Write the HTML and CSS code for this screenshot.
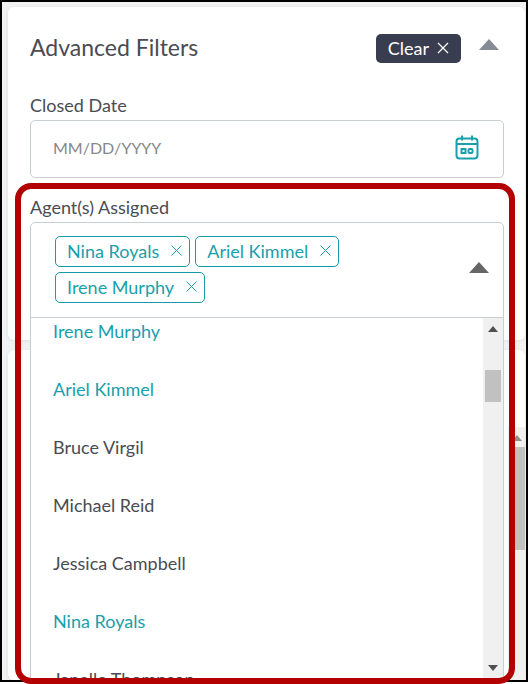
FILE: index.html
```
<!DOCTYPE html>
<html lang="en">
<head>
  <meta charset="UTF-8">
  <meta name="viewport" content="width=device-width, initial-scale=1.0">
  <title>Advanced Filters</title>
  <link rel="stylesheet" href="styles.css">
</head>
<body>
  <div class="frame">
    <section class="card filters">
      <header class="filters-header">
        <h1>Advanced Filters</h1>
        <button type="button" class="clear">Clear
          <svg width="12" height="12" viewBox="0 0 12 12"><path d="M1 1l10 10M11 1L1 11" /></svg>
        </button>
        <button type="button" class="arrow" aria-label="Collapse filters">
          <svg width="20" height="11" viewBox="0 0 20 11"><path d="M10 0l10 11H0z" /></svg>
        </button>
      </header>

      <div class="field">
        <label for="closedDate">Closed Date</label>
        <div class="date-box">
          <input type="text" id="closedDate" placeholder="MM/DD/YYYY">
          <button type="button" class="calendar" aria-label="Open calendar">
            <svg width="24" height="25" viewBox="0 0 24 25">
              <rect x="1.5" y="3.5" width="21" height="20" rx="3" />
              <path d="M1.5 9h21M7 .5v5M17 .5v5" />
              <rect x="6.5" y="14" width="4" height="4" />
              <rect x="13.5" y="14" width="4" height="4" rx="1" />
            </svg>
          </button>
        </div>
      </div>

      <div class="field">
        <label for="agentToggle">Agent(s) Assigned</label>
        <div class="select">
          <div class="tags">
            <span class="tag">Nina Royals
              <button type="button" aria-label="Remove Nina Royals"><svg width="11" height="11" viewBox="0 0 11 11"><path d="M.5 .5l10 10M10.5 .5l-10 10" /></svg></button>
            </span>
            <span class="tag">Ariel Kimmel
              <button type="button" aria-label="Remove Ariel Kimmel"><svg width="11" height="11" viewBox="0 0 11 11"><path d="M.5 .5l10 10M10.5 .5l-10 10" /></svg></button>
            </span>
            <span class="tag">Irene Murphy
              <button type="button" aria-label="Remove Irene Murphy"><svg width="11" height="11" viewBox="0 0 11 11"><path d="M.5 .5l10 10M10.5 .5l-10 10" /></svg></button>
            </span>
          </div>
          <button type="button" class="arrow arrow-dark" id="agentToggle" aria-expanded="true">
            <svg width="20" height="11" viewBox="0 0 20 11"><path d="M10 0l10 11H0z" /></svg>
          </button>

          <div class="menu">
            <ul class="options" role="listbox" aria-multiselectable="true" aria-label="Agents">
              <li role="option" class="selected" aria-selected="true">Irene Murphy</li>
              <li role="option" class="selected" aria-selected="true">Ariel Kimmel</li>
              <li role="option">Bruce Virgil</li>
              <li role="option">Michael Reid</li>
              <li role="option">Jessica Campbell</li>
              <li role="option" class="selected" aria-selected="true">Nina Royals</li>
              <li role="option">Janelle Thompson</li>
            </ul>
            <div class="scrollbar">
              <svg width="10" height="6" viewBox="0 0 10 6"><path d="M5 0l5 6H0z" /></svg>
              <div class="thumb"></div>
              <svg width="10" height="6" viewBox="0 0 10 6"><path d="M0 0h10L5 6z" /></svg>
            </div>
          </div>
        </div>
      </div>
    </section>

    <section class="card results">
      <div class="scrollbar results-scroll">
        <svg width="10" height="6" viewBox="0 0 10 6"><path d="M5 0l5 6H0z" /></svg>
        <div class="thumb"></div>
      </div>
    </section>
  </div>
  <div class="highlight"></div>
</body>
</html>
```

FILE: styles.css
```
* {
  box-sizing: border-box;
}

body {
  margin: 0;
  font-family: Lato, sans-serif;
  font-size: 18px;
  color: #4a4c52;
  background: #fff;
}

h1 {
  flex: 1;
  margin: 0;
  padding-bottom: 3px;
  font-size: 23px;
  font-weight: 400;
  line-height: 26px;
}

button {
  padding: 0;
  border: 0;
  background: none;
  font: inherit;
  color: inherit;
  cursor: pointer;
}

svg {
  display: block;
}

.frame {
  display: flex;
  flex-direction: column;
  gap: 10px;
  height: calc(100vh - 2px);
  padding: 5px 1px 0 6px;
  border: 2px solid #000;
  background: #f2f2f3;
  overflow: hidden;
}

.card {
  background: #fff;
  border-radius: 6px;
  box-shadow: 0 1px 4px rgba(0, 0, 0, 0.08);
}

.filters {
  position: relative;
  z-index: 1;
  padding: 27px 21px 22px 22px;
}

.filters-header {
  display: flex;
  align-items: center;
  margin-bottom: 32px;
}

.clear {
  display: flex;
  align-items: center;
  gap: 8px;
  height: 29px;
  padding: 0 12px 2px;
  border-radius: 5px;
  background: #383e50;
  color: #fff;
}

.clear svg {
  fill: none;
  stroke: #fff;
  stroke-width: 1.3;
}

.arrow {
  margin: 0 5px 8px 18px;
  fill: #878a97;
}

.arrow-dark {
  margin: 0 0 4px;
  fill: #666;
}

.field + .field {
  margin-top: 19px;
}

label {
  display: block;
  margin-bottom: 5px;
  line-height: 20px;
}

.date-box,
.select {
  display: flex;
  align-items: center;
  border: 1px solid #c9ced3;
  border-radius: 5px;
}

.date-box {
  height: 58px;
  padding: 0 24px 3px 22px;
}

.date-box input {
  flex: 1;
  min-width: 0;
  padding: 0;
  border: 0;
  outline: 0;
  font: inherit;
  font-size: 16px;
}

.date-box input::placeholder {
  color: #85878a;
}

.calendar svg {
  fill: none;
  stroke: #1a9fab;
  stroke-width: 2;
}

.select {
  position: relative;
  justify-content: space-between;
  padding: 13px 14px 14px 24px;
  border-radius: 5px 5px 0 0;
}

.tags {
  display: flex;
  flex-wrap: wrap;
  gap: 5px;
  max-width: 380px;
}

.tag {
  display: flex;
  align-items: center;
  gap: 12px;
  height: 31px;
  padding: 0 7px 2px 11px;
  border: 1px solid #149ba6;
  border-radius: 5px;
  color: #1a9fab;
}

.tag svg {
  fill: none;
  stroke: #1a9fab;
}

.menu {
  position: absolute;
  top: 100%;
  left: -1px;
  right: -1px;
  display: flex;
  height: calc(100vh - 319px);
  border: 1px solid #c9ced3;
  background: #fff;
  overflow: hidden;
}

.options {
  display: flex;
  flex: 1;
  flex-direction: column;
  gap: 32px;
  margin: 0;
  padding: 0 22px;
  list-style: none;
  line-height: 26px;
}

.options .selected {
  color: #1a9fab;
}

.scrollbar {
  display: flex;
  flex-direction: column;
  align-items: center;
  width: 20px;
  padding: 8px 0 10px;
  background: #f0f0f0;
  fill: #505050;
}

.thumb {
  width: 16px;
  height: 32px;
  margin: 38px 0 auto;
  background: #c1c1c1;
}

.results {
  flex: 1;
  display: flex;
  justify-content: flex-end;
  padding-top: 77px;
}

.results-scroll {
  width: 17px;
  fill: #8f8f8f;
}

.results-scroll .thumb {
  height: 103px;
  margin-top: 6px;
}

.highlight {
  position: absolute;
  top: 183px;
  right: 13px;
  bottom: 0;
  left: 15px;
  border: 6px solid #b30000;
  border-radius: 16px;
  pointer-events: none;
  z-index: 2;
}
```
